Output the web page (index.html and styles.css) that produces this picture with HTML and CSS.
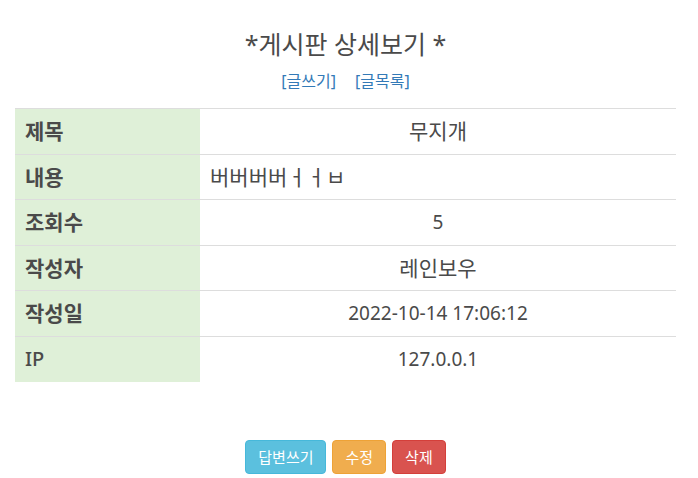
FILE: index.html
```html
<!DOCTYPE html>
<html lang="ko">
<head>
    <meta charset="UTF-8">
    <meta name="viewport" content="width=device-width, initial-scale=1.0">
    <title>게시판 상세보기</title>
    <link rel="stylesheet" href="styles.css">
</head>
<body>
    <div class="board-view">
        <h2 class="board-title">*게시판 상세보기 *</h2>
        <p class="board-links">
            <a href="#">[글쓰기]</a>
            <a href="#">[글목록]</a>
        </p>
        <table class="detail-table">
            <tr>
                <th>제목</th>
                <td class="ko">무지개</td>
            </tr>
            <tr>
                <th>내용</th>
                <td class="ko content">버버버버ㅓㅓㅂ</td>
            </tr>
            <tr>
                <th>조회수</th>
                <td>5</td>
            </tr>
            <tr>
                <th>작성자</th>
                <td class="ko">레인보우</td>
            </tr>
            <tr>
                <th>작성일</th>
                <td>2022-10-14 17:06:12</td>
            </tr>
            <tr>
                <th class="latin">IP</th>
                <td>127.0.0.1</td>
            </tr>
        </table>
        <div class="button-wrapper">
            <button class="btn btn-info">답변쓰기</button>
            <button class="btn btn-warning">수정</button>
            <button class="btn btn-danger">삭제</button>
        </div>
    </div>
</body>
</html>
```

FILE: styles.css
```css
html {
    height: 100%;
}
body {
    margin: 0;
    background: white;
    color: #4a4a4a;
    font-family: 'Noto Sans', 'Noto Sans CJK KR', sans-serif;
}
.board-view {
    padding: 0 22px 0 15px;
}
.board-title {
    margin: 0;
    padding-top: 27px;
    font-size: 25px;
    font-weight: normal;
    line-height: 34px;
    text-align: center;
}
.board-links {
    margin: 0;
    padding-top: 10px;
    height: 37px;
    font-size: 16px;
    line-height: 20px;
    text-align: center;
    word-spacing: 15px;
}
.board-links a {
    color: #337ab7;
    text-decoration: none;
    word-spacing: 0;
}
.detail-table {
    width: 100%;
    border-collapse: collapse;
    font-size: 19px;
}
.detail-table th,
.detail-table td {
    border-top: 1px solid #ddd;
    padding: 10px;
    line-height: 24.6px;
}
.detail-table th {
    width: 165px;
    background: #dff0d8;
    text-align: left;
    font-size: 21px;
    font-weight: bold;
}
.detail-table th.latin {
    font-size: 20px;
    font-weight: 500;
}
.detail-table td {
    text-align: center;
}
.detail-table td.ko {
    font-size: 21px;
}
.detail-table td.content {
    text-align: left;
}
.button-wrapper {
    display: flex;
    justify-content: center;
    gap: 6px;
    margin-top: 58px;
}
.btn {
    font-family: 'Noto Sans CJK KR', sans-serif;
    font-size: 15px;
    line-height: 20px;
    padding: 6px 12px;
    border: 1px solid transparent;
    border-radius: 4px;
    color: white;
}
.btn-info {
    background: #5bc0de;
    border-color: #46b8da;
}
.btn-warning {
    background: #f0ad4e;
    border-color: #eea236;
}
.btn-danger {
    background: #d9534f;
    border-color: #d43f3a;
}
```
